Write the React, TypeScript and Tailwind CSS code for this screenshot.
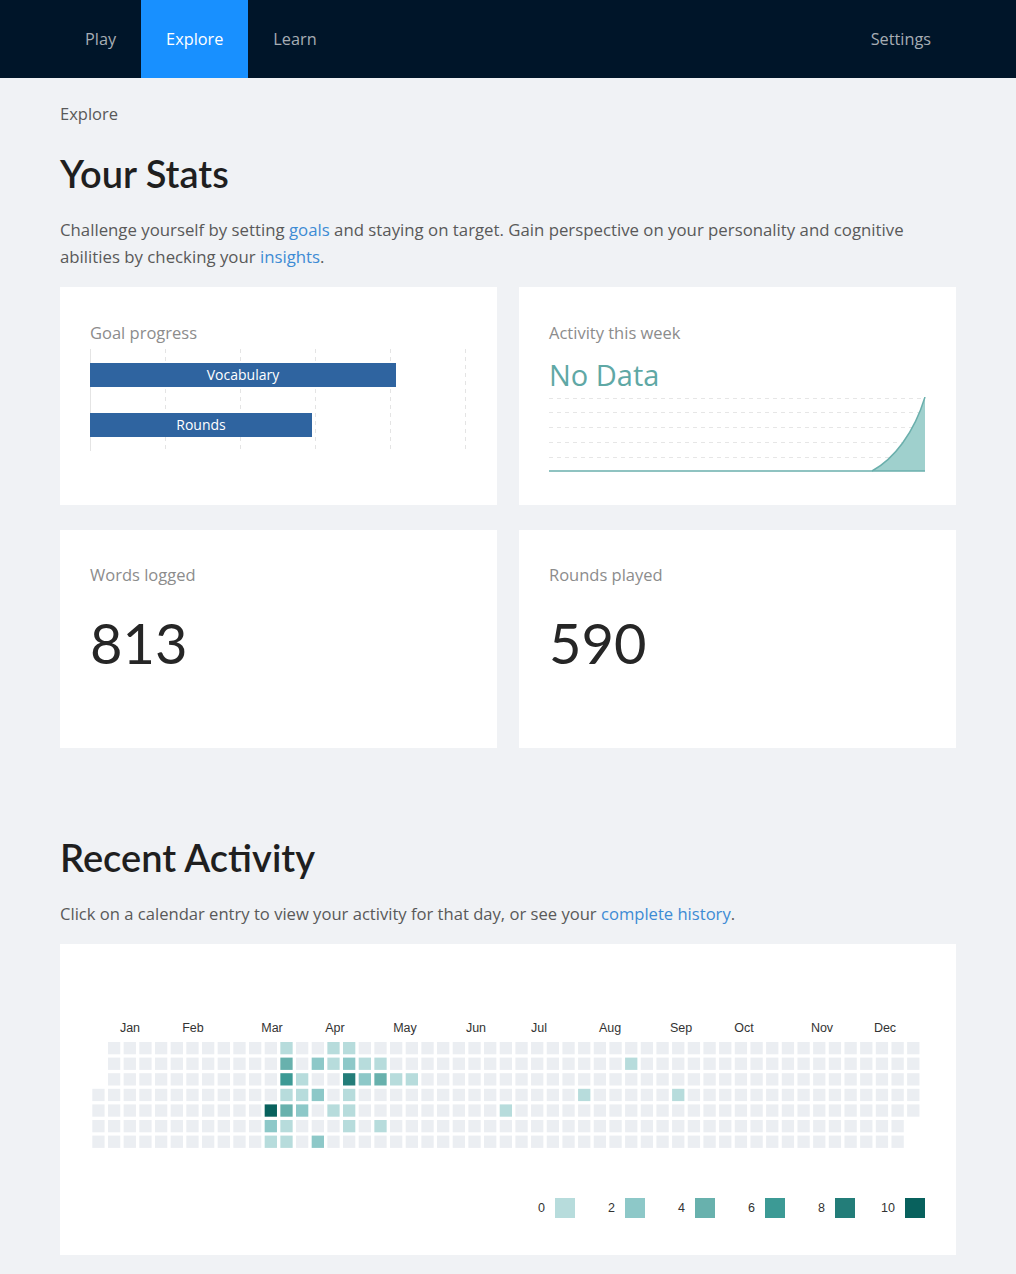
import type { ReactNode } from 'react';

const BODY = "font-['Open_Sans','Noto_Sans',sans-serif]";
const HEAD = "font-['Lato','Open_Sans',sans-serif]";

const LEVEL_COLORS = ['#ebeef2', '#b7dcdc', '#8dc8c8', '#68b1ad', '#3c9a95', '#237d79', '#08615d'];

// row-col -> level (1..6)
const ACTIVITY: Record<string, number> = {
  '0-12': 1, '0-15': 1, '0-16': 1,
  '1-12': 3, '1-14': 2, '1-15': 1, '1-16': 2, '1-17': 1, '1-18': 1, '1-34': 1,
  '2-12': 4, '2-13': 1, '2-16': 5, '2-17': 2, '2-18': 3, '2-19': 1, '2-20': 1,
  '3-12': 1, '3-13': 1, '3-14': 2, '3-16': 1, '3-31': 1, '3-37': 1,
  '4-11': 6, '4-12': 3, '4-13': 2, '4-15': 1, '4-16': 1, '4-26': 1,
  '5-11': 2, '5-12': 1, '5-16': 1, '5-18': 1,
  '6-11': 1, '6-12': 1, '6-14': 2,
};

const MONTHS: [string, number][] = [
  ['Jan', 39], ['Feb', 102], ['Mar', 181], ['Apr', 244], ['May', 314], ['Jun', 385],
  ['Jul', 448], ['Aug', 519], ['Sep', 590], ['Oct', 653], ['Nov', 731], ['Dec', 794],
];

const Card = ({ children, className = '' }: { children: ReactNode; className?: string }) => (
  <div className={`bg-white ${className}`}>{children}</div>
);

const GoalChart = () => (
  <svg width="377" height="102" className="mt-[4px] block">
    {[0, 75, 150, 225, 300, 375].map((x) => (
      <line key={x} x1={x + 0.5} x2={x + 0.5} y1="0" y2="102" stroke="#e4e4e4" strokeDasharray={x === 0 ? undefined : '4 4'} />
    ))}
    <rect x="0" y="14" width="306" height="24" fill="#2f64a0" />
    <text x="153" y="31" textAnchor="middle" fill="#fff" fontSize="14" fontFamily="'Open Sans', sans-serif">Vocabulary</text>
    <rect x="0" y="64" width="222" height="24" fill="#2f64a0" />
    <text x="111" y="81" textAnchor="middle" fill="#fff" fontSize="14" fontFamily="'Open Sans', sans-serif">Rounds</text>
  </svg>
);

const WeekChart = () => (
  <svg width="377" height="76" className="mt-[4px] block">
    {[1, 15, 30, 45, 60].map((y) => (
      <line key={y} x1="0" x2="376" y1={y + 0.5} y2={y + 0.5} stroke="#e6e6e6" strokeDasharray="4 4" />
    ))}
    <path d="M323 74 C345 62 365 36 376 0 L376 74 Z" fill="#9fd0cd" />
    <path d="M323 74 C345 62 365 36 376 0" fill="none" stroke="#6aafac" strokeWidth="1.5" />
    <line x1="0" x2="376" y1="74" y2="74" stroke="#6aafac" strokeWidth="1.5" />
  </svg>
);

const Calendar = () => {
  const cells: ReactNode[] = [];
  for (let col = 0; col < 53; col++) {
    for (let row = 0; row < 7; row++) {
      if (col === 0 && row < 3) continue;
      if (col === 52 && row > 4) continue;
      const level = ACTIVITY[`${row}-${col}`] ?? 0;
      cells.push(
        <rect key={`${row}-${col}`} x={1.3 + col * 15.67} y={31 + row * 15.6} width="12.3" height="12.3" fill={LEVEL_COLORS[level]} />
      );
    }
  }
  return (
    <svg width="834" height="140" className="block">
      {MONTHS.map(([m, x]) => (
        <text key={m} x={x} y="21" textAnchor="middle" fontSize="12.5" fill="#333" fontFamily="'Liberation Sans', Arial, sans-serif">
          {m}
        </text>
      ))}
      {cells}
    </svg>
  );
};

export default function App() {
  return (
    <div className={`min-h-[1274px] bg-[#f0f2f5] ${BODY}`}>
      <header className="h-[78px] bg-[#001529]">
        <nav className="w-[896px] mx-auto h-full flex items-stretch text-[16.3px]">
          <a className="px-[25px] flex items-center text-[#a7adb4]">Play</a>
          <a className="px-[25px] flex items-center bg-[#1890ff] text-white">Explore</a>
          <a className="px-[25px] flex items-center text-[#a7adb4]">Learn</a>
          <a className="ml-auto px-[25px] flex items-center text-[#a7adb4]">Settings</a>
        </nav>
      </header>

      <main className="w-[896px] mx-auto pb-[20px]">
        <div className="pt-[22px] text-[16.5px] leading-[27px] text-[#595959]">Explore</div>
        <h1 className={`mt-[23px] text-[38px] leading-[46px] font-semibold text-[#1f1f1f] ${HEAD}`}>Your Stats</h1>
        <p className="mt-[20px] max-w-[850px] text-[16.8px] leading-[27px] text-[#595959]">
          Challenge yourself by setting <a className="text-[#3d8bd4]">goals</a> and staying on target. Gain perspective on your
          personality and cognitive abilities by checking your <a className="text-[#3d8bd4]">insights</a>.
        </p>

        <div className="mt-[17px] grid grid-cols-2 gap-x-[22px] gap-y-[25px]">
          <Card className="h-[218px] pt-[34px] px-[30px]">
            <div className="text-[16.5px] leading-[24px] text-[#8c8c8c]">Goal progress</div>
            <GoalChart />
          </Card>
          <Card className="h-[218px] pt-[34px] px-[30px]">
            <div className="text-[16.5px] leading-[24px] text-[#8c8c8c]">Activity this week</div>
            <div className="mt-[12px] text-[29px] leading-[36px] text-[#5fa8a5]">No Data</div>
            <WeekChart />
          </Card>
          <Card className="h-[218px] pt-[33px] px-[30px]">
            <div className="text-[16.5px] leading-[24px] text-[#8c8c8c]">Words logged</div>
            <div className={`mt-[22px] text-[56px] leading-[68px] text-[#262626] ${HEAD}`}>813</div>
          </Card>
          <Card className="h-[218px] pt-[33px] px-[30px]">
            <div className="text-[16.5px] leading-[24px] text-[#8c8c8c]">Rounds played</div>
            <div className={`mt-[22px] text-[56px] leading-[68px] text-[#262626] ${HEAD}`}>590</div>
          </Card>
        </div>

        <h2 className={`mt-[86px] text-[38px] leading-[46px] font-semibold text-[#1f1f1f] ${HEAD}`}>Recent Activity</h2>
        <p className="mt-[20px] text-[16.6px] leading-[27px] text-[#595959]">
          Click on a calendar entry to view your activity for that day, or see your{' '}
          <a className="text-[#3d8bd4]">complete history</a>.
        </p>

        <Card className="mt-[17px] pt-[67px] pb-[37px] px-[31px]">
          <Calendar />
          <div className="mt-[47px] flex justify-end font-['Liberation_Sans',Arial,sans-serif] text-[12.5px] text-[#333]">
            {[0, 2, 4, 6, 8, 10].map((n, i) => (
              <div key={n} className="w-[70px] flex items-center justify-end gap-[10px]">
                <span>{n}</span>
                <span className="w-[20px] h-[20px]" style={{ backgroundColor: LEVEL_COLORS[i + 1] }} />
              </div>
            ))}
          </div>
        </Card>
      </main>
    </div>
  );
}
